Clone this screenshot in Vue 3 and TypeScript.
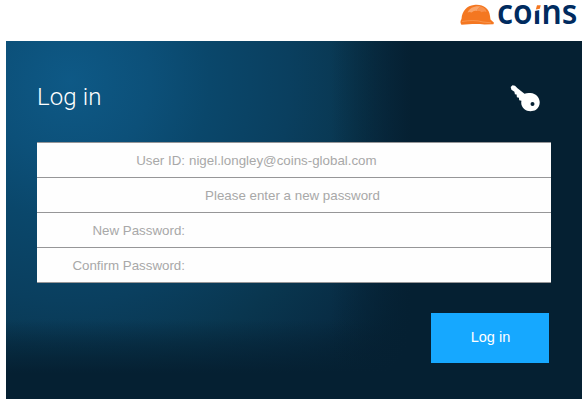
<script setup lang="ts">
interface Row { label: string; value: string; centered?: boolean }
const rows: Row[] = [
  { label: 'User ID:', value: 'nigel.longley@coins-global.com' },
  { label: 'Please enter a new password', value: '', centered: true },
  { label: 'New Password:', value: '' },
  { label: 'Confirm Password:', value: '' },
]
</script>

<template>
  <div class="page">
    <header class="brand">
      <svg class="logo" viewBox="0 0 124 41" width="124" height="41">
        <path d="M1.500 19C2 11 7 5.500 14 5c9-1 15 3 16 11l.5 3.500 3.500 3.200-.6 1.600-9 .2c-7-.8-14-.5-23 .2C-.2 22.500.5 20.500 1.500 19Z" fill="#f47721" />
        <path d="M7.500 12.500C10 8 14 5.800 20.500 6.500c-2 1.500-3 2.500-3.500 4.500-2.500-.8-4 .5-5.500 1.500-1.500-.8-2.500-.6-4 0Z" fill="#f9a56a" />
        <path d="M20.500 6.500c3.500.7 5.500 2.500 6 5.500-1.500-.8-3.500-.8-5 .3-.8-1.200-2.500-1.600-4.500-1.300.5-2 1.500-3.200 3.500-4.500Z" fill="#f7904c" />
        <path d="M2 21.500c7-1.200 15-1.500 21 .5l8 .8" fill="none" stroke="#f9a05f" stroke-width=".7" />
        <text x="37" y="24.300" textLength="80.500" lengthAdjust="spacingAndGlyphs" class="wordmark">coıns</text>
        <path d="M73.500 4.500h7.400v5.300l-7.400 1.500Z" fill="#fff" />
        <path d="M77 5.200h3.800l-1 3.600-4 .6Z" fill="#f47721" />
      </svg>
    </header>
    <main class="panel">
      <div class="heading">
        <h1>Log in</h1>
        <svg class="key" viewBox="0 0 30 28" width="30" height="28">
          <path fill="#fff" fill-rule="evenodd" d="M.7 2 2.500.3 5 .8l2.500 2.500 7 5.400C17 7.800 19 7.800 22.500 8.300c8.500 2.500 9.300 12.600 3.500 16.500-6 3.500-14.500.5-14.800-7l.2-2.100-2.200-.5-.3-2.400-2-.5-.3-2.700-1.700-.4-.5-2.500-3-2Zm21.800 15a2 2 0 1 0 0 4 2 2 0 0 0 0-4Z" />
        </svg>
      </div>
      <div class="form">
        <div v-for="row in rows" :key="row.label" class="row" :class="{ centered: row.centered }">
          <span class="label">{{ row.label }}</span>
          <span v-if="row.value">{{ row.value }}</span>
        </div>
      </div>
      <button class="submit" type="button">Log in</button>
    </main>
  </div>
</template>

<style>
body { background: #fff; }
</style>

<style scoped>
.page { width: 584px; height: 407px; overflow: hidden; font-family: "Liberation Sans", Arial, sans-serif; display: flex; flex-direction: column; }
.brand { height: 41px; flex: none; display: flex; justify-content: flex-end; }
.wordmark { font: 600 34px "Noto Sans", sans-serif; fill: #002b5f; }
.panel {
  width: 576px; height: 358px; margin-left: 6px; box-sizing: border-box; padding: 39px 31px 0;
  display: flex; flex-direction: column;
  background:
    linear-gradient(to right, rgba(5,32,50,0) 325px, rgba(5,32,50,.45) 362px, #052032 405px),
    linear-gradient(to bottom, rgba(5,32,50,0) 278px, rgba(5,32,50,.5) 302px, #052032 332px),
    radial-gradient(circle at 64px 40px, #0e5986 0, #0c5079 80px, #0a476b 140px, #0a3f5f 220px, #09364f 290px, #082d45 350px, #052032 430px);
}
.heading { height: 62px; flex: none; display: flex; justify-content: space-between; align-items: flex-start; }
h1 { margin: 0; color: #fff; font: 300 24px/34px Roboto, sans-serif; letter-spacing: .1px; }
.key { margin: 5px 11px 0 0; }
.form { width: 514px; box-sizing: border-box; border-top: 1px solid #969698; background: #fefefe; }
.row { height: 35px; box-sizing: border-box; border-bottom: 1px solid #969698; display: flex; align-items: center; gap: 4px; color: #a8a8a8; font-size: 13.333px; line-height: 16px; padding-top: 1px; white-space: pre; }
.label { width: 148px; text-align: right; flex: none; }
.centered .label { width: 511px; text-align: center; }
.submit { align-self: flex-end; width: 118px; height: 50px; margin: 30px 2px 0 0; padding: 0 0 2px 1px; border: 0; background: #16a8ff; color: #fff; font: 400 14.500px/18px "Liberation Sans", Arial, sans-serif; }
</style>
